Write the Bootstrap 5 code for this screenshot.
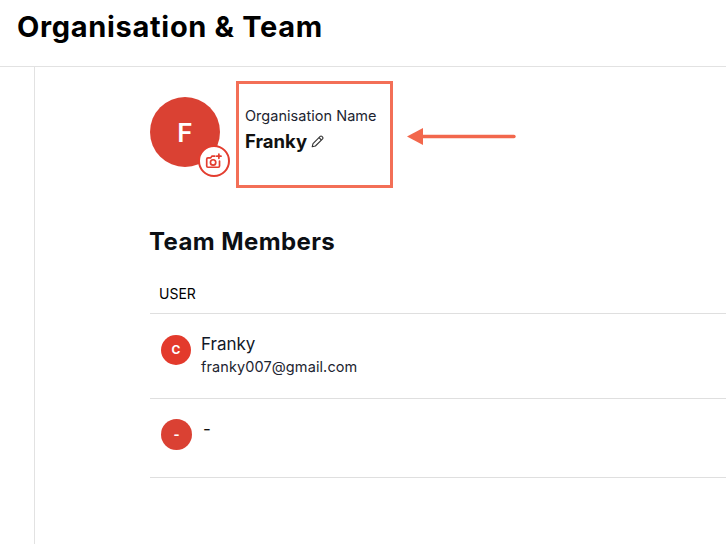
<!DOCTYPE html>
<html lang="en">
<head>
<meta charset="utf-8">
<title>Organisation &amp; Team</title>
<link href="https://cdn.jsdelivr.net/npm/bootstrap@5.3.0/dist/css/bootstrap.min.css" rel="stylesheet">
<style>
html,body{height:544px;overflow:hidden;background:#fff;}
body{font-family:Inter,"Noto Sans",sans-serif;color:#101418;}
.top-head{height:67px;border-bottom:1px solid #e2e2e2;padding:8px 0 0 17px;}
.top-head h1{font-size:29px;font-weight:700;line-height:38px;margin:0;color:#000;letter-spacing:.68px;}
.shell{height:477px;}
.rail{width:35px;border-right:1px solid #e2e2e2;flex:none;}
.main-area{padding-left:115px;flex:1;min-width:0;position:relative;}
.org-row{padding-top:14px;height:120px;}
.org-avatar{width:70px;height:70px;margin-top:16px;background:#da4133;color:#fff;font-size:26px;font-weight:600;position:relative;flex:none;}
.cam-badge{position:absolute;right:-10px;bottom:-10px;width:32px;height:32px;background:#fff;border:2px solid #e33d2f;border-radius:50%;}
.org-box{width:157px;height:107px;margin-left:16px;border:3px solid #f36f57;padding:21px 0 0 6px;}
.org-label{font-size:14.5px;line-height:22px;color:#1c2430;letter-spacing:.03px;white-space:nowrap;}
.org-name{font-size:18.5px;font-weight:700;line-height:28px;color:#111;}
.arrow-mark{position:absolute;left:372px;top:58px;}
.team-title{font-size:24px;font-weight:700;line-height:32px;margin:0 0 0 -1px;padding-top:39px;color:#0c0f14;letter-spacing:.4px;}
.head-row{height:56px;padding:18px 0 0 9px;border-bottom:1px solid #dfdfdf;font-size:14px;color:#000;line-height:36px;}
.member-row{border-bottom:1px solid #dfdfdf;}
.member-a{height:85px;padding:21px 0 0 11px;}
.member-b{height:79px;padding:20px 0 0 11px;}
.mini-a{width:30px;height:30px;background:#e33a2c;color:#fff;font-size:12px;font-weight:700;flex:none;}
.mini-b{width:31px;height:31px;background:#da4133;color:#fff;font-size:13px;font-weight:700;flex:none;}
.member-text{margin-left:2px;margin-top:-1px;}
.m-name{font-size:17px;line-height:20px;color:#111827;}
.m-mail{font-size:14.5px;line-height:26px;color:#1c2430;letter-spacing:.1px;}
.m-dash{font-size:17px;line-height:20px;color:#111;margin-left:3px;}
</style>
</head>
<body>
<header class="top-head"><h1>Organisation &amp; Team</h1></header>
<div class="shell d-flex">
  <div class="rail"></div>
  <main class="main-area">
    <section class="org-row d-flex align-items-start">
      <div class="org-avatar rounded-circle d-flex align-items-center justify-content-center">F
        <span class="cam-badge d-flex align-items-center justify-content-center">
          <svg width="18" height="16" viewBox="0 0 20 18" fill="none" stroke="#e33d2f" stroke-width="1.9" stroke-linecap="round" stroke-linejoin="round"><path d="M11 3.5H7.6L6.3 5.5H3.2A1.4 1.4 0 0 0 1.8 6.9V14.6A1.4 1.4 0 0 0 3.2 16H14.8A1.4 1.4 0 0 0 16.2 14.6V9"/><circle cx="9" cy="10.6" r="3"/><path d="M15.5 1.2V6M13.1 3.6H17.9"/></svg>
        </span>
      </div>
      <div class="org-box">
        <div class="org-label">Organisation Name</div>
        <div class="org-name d-flex align-items-center gap-1">Franky
          <svg width="13" height="13" viewBox="0 0 13 13" fill="none" stroke="#333" stroke-width="1.1" stroke-linejoin="round"><path d="M1.2 11.8L2 8.6L9.2 1.4A1.2 1.2 0 0 1 10.9 1.4L11.6 2.1A1.2 1.2 0 0 1 11.6 3.8L4.4 11L1.2 11.8Z"/><path d="M8 2.6L10.4 5"/></svg>
        </div>
      </div>
    </section>
    <svg class="arrow-mark" width="110" height="24" viewBox="0 0 110 24"><path d="M15 11.5H107" stroke="#f2674c" stroke-width="3.4" stroke-linecap="round"/><path d="M0 11.5L16 3V20Z" fill="#f2674c"/></svg>
    <h2 class="team-title">Team Members</h2>
    <div class="head-row">USER</div>
    <div class="member-row member-a d-flex gap-2 align-items-start">
      <span class="mini-a rounded-circle d-flex align-items-center justify-content-center">C</span>
      <div class="member-text"><div class="m-name">Franky</div><div class="m-mail">franky007@gmail.com</div></div>
    </div>
    <div class="member-row member-b d-flex gap-2 align-items-start">
      <span class="mini-b rounded-circle d-flex align-items-center justify-content-center">-</span>
      <div class="m-dash">-</div>
    </div>
  </main>
</div>
<script src="https://cdn.jsdelivr.net/npm/bootstrap@5.3.0/dist/js/bootstrap.bundle.min.js"></script>
</body>
</html>
